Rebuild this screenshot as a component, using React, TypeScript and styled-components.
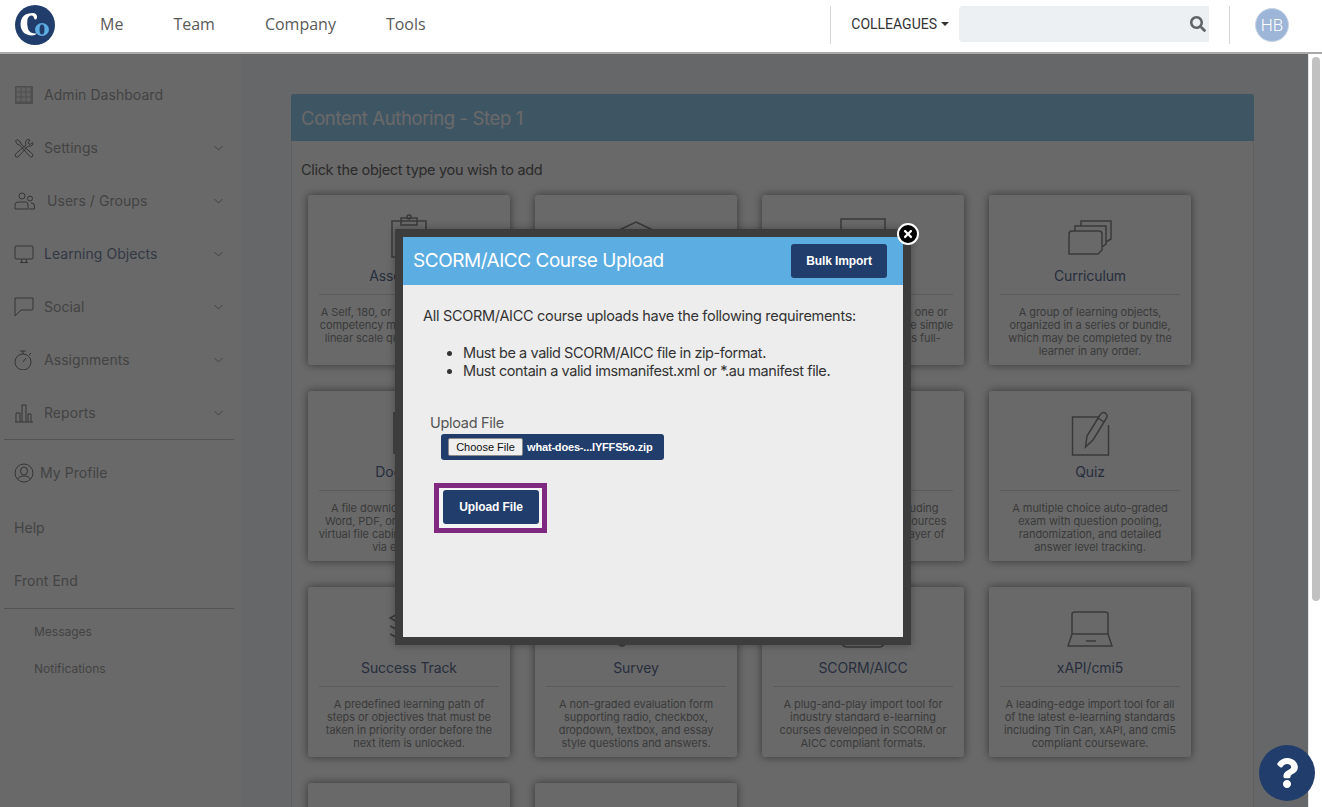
import React from 'react'
import styled, { createGlobalStyle } from 'styled-components'
import { FaSearch, FaTimes, FaQuestion } from 'react-icons/fa'

const GlobalStyle = createGlobalStyle`
  html, body { margin: 0; padding: 0; height: 100%; overflow: hidden; }
  * { box-sizing: border-box; }
  body { font-family: Inter, "Liberation Sans", sans-serif; background: #fff; }
`

const Page = styled.div`
  height: 100vh;
  display: flex;
  flex-direction: column;
  overflow: hidden;
`

const TopBar = styled.header`
  height: 54px;
  flex: none;
  display: flex;
  align-items: center;
  background: #fff;
  border-bottom: 2px solid #a9a9a9;
  padding: 0 33px 4px 15px;
`

const Logo = styled.div`
  width: 40px;
  height: 40px;
  flex: none;
  margin: 2px 45px 0 0;
`

const NavLinks = styled.nav`
  display: flex;
  gap: 50px;
  flex: 1;
`

const NavLink = styled.span`
  font-family: "Open Sans", sans-serif;
  font-size: 16px;
  color: #595959;
`

const Separator = styled.div`
  width: 1px;
  height: 38px;
  margin-top: 1px;
  background: #d5d5d5;
`

const Colleagues = styled.div`
  font-family: Roboto, sans-serif;
  font-size: 14px;
  color: #333;
  display: flex;
  align-items: center;
  gap: 4px;
  margin: 0 10px 0 20px;
`

const Caret = styled.span`
  width: 0;
  height: 0;
  border-left: 4px solid transparent;
  border-right: 4px solid transparent;
  border-top: 4px solid #333;
`

const SearchBox = styled.div`
  width: 250px;
  height: 36px;
  background: #edf0f3;
  border-radius: 4px 0 0 4px;
  display: flex;
  align-items: center;
  justify-content: flex-end;
  padding-right: 3px;
  margin-right: 20px;
  color: #5f6368;
  font-size: 16px;
`

const Avatar = styled.div`
  width: 34px;
  height: 34px;
  border-radius: 50%;
  background: #9db5d6;
  border: 1px solid #c9d5e6;
  color: #fff;
  font-family: Roboto, sans-serif;
  font-weight: 300;
  font-size: 17px;
  display: flex;
  align-items: center;
  justify-content: center;
  margin: 2px 0 0 25px;
`

const Body = styled.div`
  flex: 1;
  display: flex;
  min-height: 0;
`

const Shell = styled.div`
  flex: 1;
  display: flex;
  position: relative;
  min-width: 0;
  overflow: hidden;
`

const ScrollTrack = styled.div`
  width: 14px;
  flex: none;
  background: #fff;
  border-left: 1px solid #e8e8e8;
  padding: 3px 2px 0 3px;
`

const ScrollThumb = styled.div`
  height: 544px;
  background: #c1c1c1;
  border-radius: 4px;
`

const Sidebar = styled.aside`
  width: 241px;
  flex: none;
  background: #fff;
  padding-top: 14px;
`

const SideItem = styled.div<{ $h?: number; $pt?: number }>`
  height: ${p => p.$h ?? 53}px;
  padding: ${p => p.$pt ?? 0}px 18px 0 14px;
  display: flex;
  align-items: center;
  font-size: 14px;
  letter-spacing: 0.05px;
  color: #a4a4a4;
`

const SideIcon = styled.svg<{ $gap?: number; $w?: number }>`
  width: ${p => p.$w ?? 20}px;
  height: 20px;
  flex: none;
  margin-right: ${p => p.$gap ?? 10}px;
  fill: none;
  stroke: #808080;
  stroke-width: 1;
`

const SideLabel = styled.span<{ $navy?: boolean }>`
  flex: 1;
  color: ${p => (p.$navy ? '#7d89a6' : 'inherit')};
`

const SideChevron = styled.svg`
  width: 9px;
  height: 6px;
  fill: none;
  stroke: #a4a4a4;
  stroke-width: 1;
`

const SideRule = styled.div`
  height: 1px;
  background: #c9c9c9;
  margin: 0 7px 0 4px;
`

const SubItem = styled.div<{ $h: number }>`
  height: ${p => p.$h}px;
  display: flex;
  align-items: center;
  padding-left: 34px;
  font-size: 12px;
  color: #a4a4a4;
`

const Main = styled.main`
  flex: 1;
  min-width: 0;
  background: #f6f9fc;
  padding: 40px 54px 0 50px;
`

const Panel = styled.section`
  background: #fff;
  border-radius: 3px 3px 0 0;
  border: 1px solid #e6e6e6;
  border-bottom: 0;
  height: 800px;
`

const PanelHead = styled.div`
  height: 47px;
  margin: -1px -1px 0;
  background: #98cff2;
  border-radius: 3px 3px 0 0;
  color: #fff;
  font-size: 18.5px;
  letter-spacing: -0.38px;
  display: flex;
  align-items: center;
  padding-left: 10px;
`

const PanelHint = styled.p`
  margin: 0;
  padding: 20px 0 0 9px;
  height: 54px;
  font-size: 14.5px;
  letter-spacing: -0.32px;
  color: #6a6a6a;
`

const CardGrid = styled.div`
  display: grid;
  grid-template-columns: repeat(4, 202px);
  gap: 26px 25px;
  padding-left: 16px;
`

const Card = styled.div`
  height: 170px;
  background: #fff;
  border-radius: 3px;
  box-shadow: 0 0 8px rgba(0, 0, 0, 0.5);
  padding: 22px 11px 0;
  display: flex;
  flex-direction: column;
  align-items: stretch;
  text-align: center;
`

const CardIconSlot = styled.div`
  height: 40px;
  flex: none;
  display: flex;
  align-items: center;
  justify-content: center;
`

const CardIcon = styled.svg`
  width: 46px;
  height: 46px;
  fill: none;
  stroke: #8a8a8a;
  stroke-width: 1.5;
`

const CardTitle = styled.h4`
  margin: 9px 0 0;
  height: 20px;
  line-height: 20px;
  font-size: 14px;
  font-weight: 400;
  letter-spacing: -0.1px;
  color: #5f7096;
`

const CardRule = styled.div`
  height: 1px;
  flex: none;
  margin-top: 8px;
  background: #dcdcdc;
`

const CardText = styled.p`
  margin: 11px -6px 0;
  font-size: 11px;
  line-height: 13px;
  color: #8f8f8f;
  white-space: pre-line;
  letter-spacing: -0.07px;
`

const Dim = styled.div`
  position: absolute;
  inset: 0;
  background: rgba(0, 0, 0, 0.59);
`

const Modal = styled.div`
  position: absolute;
  left: 395px;
  top: 175px;
  width: 516px;
  height: 416px;
  border: 8px solid #3d3d3d;
  background: #ededed;
  box-shadow: 0 0 8px rgba(0, 0, 0, 0.3);
`

const ModalClose = styled.div`
  position: absolute;
  top: -14px;
  right: -16px;
  width: 22px;
  height: 22px;
  border-radius: 50%;
  background: #000;
  border: 2.5px solid #fff;
  color: #fff;
  font-size: 12px;
  display: flex;
  align-items: center;
  justify-content: center;
`

const ModalHead = styled.div`
  height: 48px;
  background: #5cade2;
  display: flex;
  align-items: center;
  justify-content: space-between;
  padding: 0 16px 0 10px;
`

const ModalTitle = styled.h3`
  margin: 0 0 1px;
  font-size: 19px;
  font-weight: 400;
  letter-spacing: -0.47px;
  color: #fff;
`

const NavyButton = styled.button<{ $w: number }>`
  width: ${p => p.$w}px;
  height: 34px;
  background: #213d6b;
  color: #fff;
  border: 0;
  border-radius: 3px;
  font-family: "Liberation Sans", Arial, sans-serif;
  font-size: 12px;
  font-weight: 700;
  letter-spacing: -0.1px;
  padding: 0;
`

const ModalBody = styled.div`
  padding: 21px 20px 0;
  font-size: 14.5px;
  letter-spacing: -0.3px;
  color: #333;
`

const Intro = styled.p`
  margin: 0;
  line-height: 20px;
`

const ReqList = styled.ul`
  margin: 18px 0 0;
  padding-left: 40px;
  line-height: 18px;
  letter-spacing: -0.43px;
`

const FieldLabel = styled.label`
  display: block;
  margin: 33px 0 0 7px;
  height: 20px;
  line-height: 20px;
  color: #555;
`

const FileBar = styled.div`
  width: 223px;
  height: 26px;
  margin: 1px 0 0 18px;
  background: #213d6b;
  border-radius: 3px;
  display: flex;
  align-items: center;
  padding-left: 7px;
  gap: 4px;
  font-family: "Liberation Sans", Arial, sans-serif;
  font-size: 11px;
  letter-spacing: -0.17px;
  font-weight: 700;
  color: #fff;
`

const ChooseFile = styled.span`
  width: 75px;
  height: 18px;
  background: #efefef;
  border: 1px solid #8a8a8a;
  border-radius: 2px;
  color: #111;
  font-weight: 400;
  letter-spacing: 0;
  display: flex;
  align-items: center;
  justify-content: center;
`

const UploadWrap = styled.div`
  width: fit-content;
  margin: 23px 0 0 11px;
  border: 5px solid #7f2a80;
  padding: 2px 3px 4px 4px;
  background: #f4f4f4;
  display: flex;
`

const HelpButton = styled.div`
  position: fixed;
  right: 7px;
  bottom: 6px;
  width: 56px;
  height: 56px;
  border-radius: 50%;
  background: #213d6b;
  color: #fff;
  font-size: 30px;
  display: flex;
  align-items: center;
  justify-content: center;
`

const icons: Record<string, React.ReactNode> = {
  clipboard: (
    <>
      <rect x="6" y="7" width="34" height="36" />
      <rect x="15" y="4" width="16" height="7" />
      <circle cx="23" cy="3" r="2" />
    </>
  ),
  cap: <path d="M23 8 L44 18 L23 28 L2 18 Z M10 23 V35 Q23 43 36 35 V23" />,
  monitor: (
    <>
      <rect x="1" y="5" width="44" height="28" />
      <path d="M23 33 V40 M14 40 H32" />
    </>
  ),
  stack: <path d="M2 20 Q2 17 5 17 H32 Q35 17 35 20 V36 L31 40 H2 Z M8 17 V12 H39 V30 L35 33 M14 12 V7 H44 V25 L39 28" />,
  doc: <path d="M8 3 H30 L38 11 V43 H8 Z M30 3 V11 H38" />,
  play: (
    <>
      <rect x="5" y="8" width="36" height="30" />
      <path d="M19 16 L30 23 L19 30 Z" />
    </>
  ),
  book: <path d="M23 10 Q14 4 4 7 V38 Q14 35 23 41 Q32 35 42 38 V7 Q32 4 23 10 Z M23 10 V41" />,
  quiz: <path d="M31 7 H5.5 V45 H41.5 V15 M18.5 37 L20 26 L33 5 Q35 1.5 38.5 3 Q41 5.5 39.5 8 L26 30 Z M31 8 L37 12" />,
  layers: <path d="M23 2 L42 12 L23 22 L4 12 Z M4 20 L23 30 L42 20 M4 28 L23 38 L42 28" />,
  survey: (
    <>
      <path d="M8 6 H38 V30 H8 Z M15 15 H31 M15 23 H31" />
      <circle cx="9" cy="37" r="3" />
    </>
  ),
  box: <path d="M6 8 H40 V30 H6 Z M2 36 Q2 41 7 41 H39 Q44 41 44 36 V30 H2 Z" />,
  laptop: <path d="M5 28 V8 Q5 6 8 6 H38 Q41 6 41 8 V28 M5 28 H41 L45 40 H1 Z M19 35 H29" />,
}

const cards = [
  { icon: 'clipboard', title: 'Assessment', text: 'A Self, 180, or 360 degree surveys\ncompetency model assessment on\nlinear scale question types used.' },
  { icon: 'cap', title: 'Course', text: 'A structured course of pages,\nmedia and exams that can\nbe built in any order and\ntracked by the system.' },
  { icon: 'monitor', title: 'Content Page', text: 'Web material organized in one or\nmore pages, from the single simple\ndocuments to as much as full-\nblown rich media.' },
  { icon: 'stack', title: 'Curriculum', text: 'A group of learning objects,\norganized in a series or bundle,\nwhich may be completed by the\nlearner in any order.' },
  { icon: 'doc', title: 'Document', text: 'A file download item such as a\nWord, PDF, or Excel document in\nvirtual file cabinet, or one delivered\nvia e-mail link.' },
  { icon: 'play', title: 'Video', text: 'A hosted or embedded video\nwith tracked viewing time\nand completion status\nfor each learner.' },
  { icon: 'book', title: 'Library', text: 'A virtual classroom, including\nlinks to files and other resources\nand tools, with a secure layer of\nuser tracking.' },
  { icon: 'quiz', title: 'Quiz', text: 'A multiple choice auto-graded\nexam with question pooling,\nrandomization, and detailed\nanswer level tracking.' },
  { icon: 'layers', title: 'Success Track', text: 'A predefined learning path of\nsteps or objectives that must be\ntaken in priority order before the\nnext item is unlocked.' },
  { icon: 'survey', title: 'Survey', text: 'A non-graded evaluation form\nsupporting radio, checkbox,\ndropdown, textbox, and essay\nstyle questions and answers.' },
  { icon: 'box', title: 'SCORM/AICC', text: 'A plug-and-play import tool for\nindustry standard e-learning\ncourses developed in SCORM or\nAICC compliant formats.' },
  { icon: 'laptop', title: 'xAPI/cmi5', text: 'A leading-edge import tool for all\nof the latest e-learning standards\nincluding Tin Can, xAPI, and cmi5\ncompliant courseware.' },
]

const gridCells = [2.5, 7.5, 12.5].flatMap(y => [2.5, 7.5, 12.5].map(x => ({ x, y })))

const sideItems = [
  {
    label: 'Admin Dashboard',
    icon: (
      <>
        <rect x="1" y="1" width="18" height="18" fill="#bdbdbd" stroke="none" />
        {gridCells.map(c => (
          <rect key={`${c.x}-${c.y}`} x={c.x} y={c.y} width="4" height="4" fill="#eeeeee" stroke="none" />
        ))}
      </>
    ),
  },
  {
    label: 'Settings',
    more: true,
    icon: <path d="M1.5 3 L3 1.5 L6.5 4 L7 6 L18.5 16 Q19.5 18 18 19 Q16.5 19.5 15.5 18 L5.5 7 L3.5 6.5 Z M13 1.5 Q10.5 4 12 7 L1.5 16 Q0.5 18 2 19 Q3.5 19.5 5 18 L14 8 Q17 9 19 6.5 L18.5 4.5 L16 6.5 L14 5 L16 2 Z" />,
  },
  {
    label: 'Users / Groups',
    more: true,
    wide: true,
    icon: <path d="M8 2 A3 3 0 1 1 8 8 A3 3 0 1 1 8 2 M16 5 A2.5 2.5 0 1 1 16 10 A2.5 2.5 0 1 1 16 5 M1 18 V14 Q1 11 4 11 H12 Q14 11 14 14 V18 H1 M17 12 Q20.5 12 20.5 15 V18 H15" />,
  },
  { label: 'Learning Objects', more: true, navy: true, icon: <path d="M2 2 H18 Q19 2 19 3 V14 Q19 15 18 15 H2 Q1 15 1 14 V3 Q1 2 2 2 Z M8 15 L7.5 18 M12 15 L12.5 18 M6 18.5 H14" /> },
  { label: 'Social', more: true, icon: <path d="M1 1 H19 V12 Q19 13 18 13 H7 L1 19 Z" /> },
  { label: 'Assignments', more: true, icon: <path d="M9 4 A8 8 0 1 1 9 20 A8 8 0 1 1 9 4 M6 1 H12 M9 1 V4 M9 12 L12 8 M15 5 L17 3" /> },
  { label: 'Reports', more: true, icon: <path d="M1 19 H19 M2 19 V10 H6 V19 M8 19 V2 H12 V19 M14 19 V11 H17 V19" /> },
]

export default function App() {
  return (
    <Page>
      <GlobalStyle />
      <TopBar>
        <Logo>
          <svg width="40" height="40" viewBox="0 0 40 40">
            <circle cx="20" cy="20" r="20" fill="#213d6b" />
            <path d="M18 8 Q6 8 5.5 19 Q6 30 17 30.5 Q20 30.5 22 28.5 Q15 29 13 24 Q11.5 19 12.5 14 Q14 10 17 10.5 Q19 11 19 13 Q19.5 15 21 14.5 Q22.5 13.5 22 11 Q21 8 18 8 Z" fill="#fff" />
            <ellipse cx="27" cy="24.5" rx="7" ry="6.5" fill="#5cade2" />
            <ellipse cx="27" cy="24.5" rx="2.5" ry="5" fill="#213d6b" />
          </svg>
        </Logo>
        <NavLinks>
          <NavLink>Me</NavLink>
          <NavLink>Team</NavLink>
          <NavLink>Company</NavLink>
          <NavLink>Tools</NavLink>
        </NavLinks>
        <Separator />
        <Colleagues>COLLEAGUES <Caret /></Colleagues>
        <SearchBox><FaSearch /></SearchBox>
        <Separator />
        <Avatar>HB</Avatar>
      </TopBar>
      <Body>
        <Shell>
          <Sidebar>
            {sideItems.map(item => (
              <SideItem key={item.label}>
                <SideIcon viewBox={item.wide ? '0 0 21 20' : '0 0 20 20'} $w={item.wide ? 21 : 20} $gap={item.wide ? 12 : 10}>
                  {item.icon}
                </SideIcon>
                <SideLabel $navy={item.navy}>{item.label}</SideLabel>
                {item.more && (
                  <SideChevron viewBox="0 0 9 6"><path d="M0.5 1 L4.5 5 L8.5 1" /></SideChevron>
                )}
              </SideItem>
            ))}
            <SideRule />
            <SideItem $h={65}>
              <SideIcon viewBox="0 0 20 20" $gap={6}>
                <path d="M10 1 A9 9 0 1 1 10 19 A9 9 0 1 1 10 1 M10 4 A3.5 4 0 1 1 10 12 A3.5 4 0 1 1 10 4 M4 16 Q5 13 8 13 H12 Q15 13 16 16" />
              </SideIcon>
              <SideLabel>My Profile</SideLabel>
            </SideItem>
            <SideItem $h={45}>Help</SideItem>
            <SideItem $h={58} $pt={2}>Front End</SideItem>
            <SideRule />
            <SubItem $h={45}>Messages</SubItem>
            <SubItem $h={28}>Notifications</SubItem>
          </Sidebar>
          <Main>
            <Panel>
              <PanelHead>Content Authoring - Step 1</PanelHead>
              <PanelHint>Click the object type you wish to add</PanelHint>
              <CardGrid>
                {cards.map(card => (
                  <Card key={card.title}>
                    <CardIconSlot>
                      <CardIcon viewBox="0 0 46 46">{icons[card.icon]}</CardIcon>
                    </CardIconSlot>
                    <CardTitle>{card.title}</CardTitle>
                    <CardRule />
                    <CardText>{card.text}</CardText>
                  </Card>
                ))}
                <Card />
                <Card />
              </CardGrid>
            </Panel>
          </Main>
          <Dim />
          <Modal>
            <ModalClose><FaTimes /></ModalClose>
            <ModalHead>
              <ModalTitle>SCORM/AICC Course Upload</ModalTitle>
              <NavyButton $w={96}>Bulk Import</NavyButton>
            </ModalHead>
            <ModalBody>
              <Intro>All SCORM/AICC course uploads have the following requirements:</Intro>
              <ReqList>
                <li>Must be a valid SCORM/AICC file in zip-format.</li>
                <li>Must contain a valid imsmanifest.xml or *.au manifest file.</li>
              </ReqList>
              <FieldLabel>Upload File</FieldLabel>
              <FileBar>
                <ChooseFile>Choose File</ChooseFile>
                what-does-...IYFFS5o.zip
              </FileBar>
              <UploadWrap>
                <NavyButton $w={96}>Upload File</NavyButton>
              </UploadWrap>
            </ModalBody>
          </Modal>
        </Shell>
        <ScrollTrack><ScrollThumb /></ScrollTrack>
      </Body>
      <HelpButton><FaQuestion /></HelpButton>
    </Page>
  )
}
